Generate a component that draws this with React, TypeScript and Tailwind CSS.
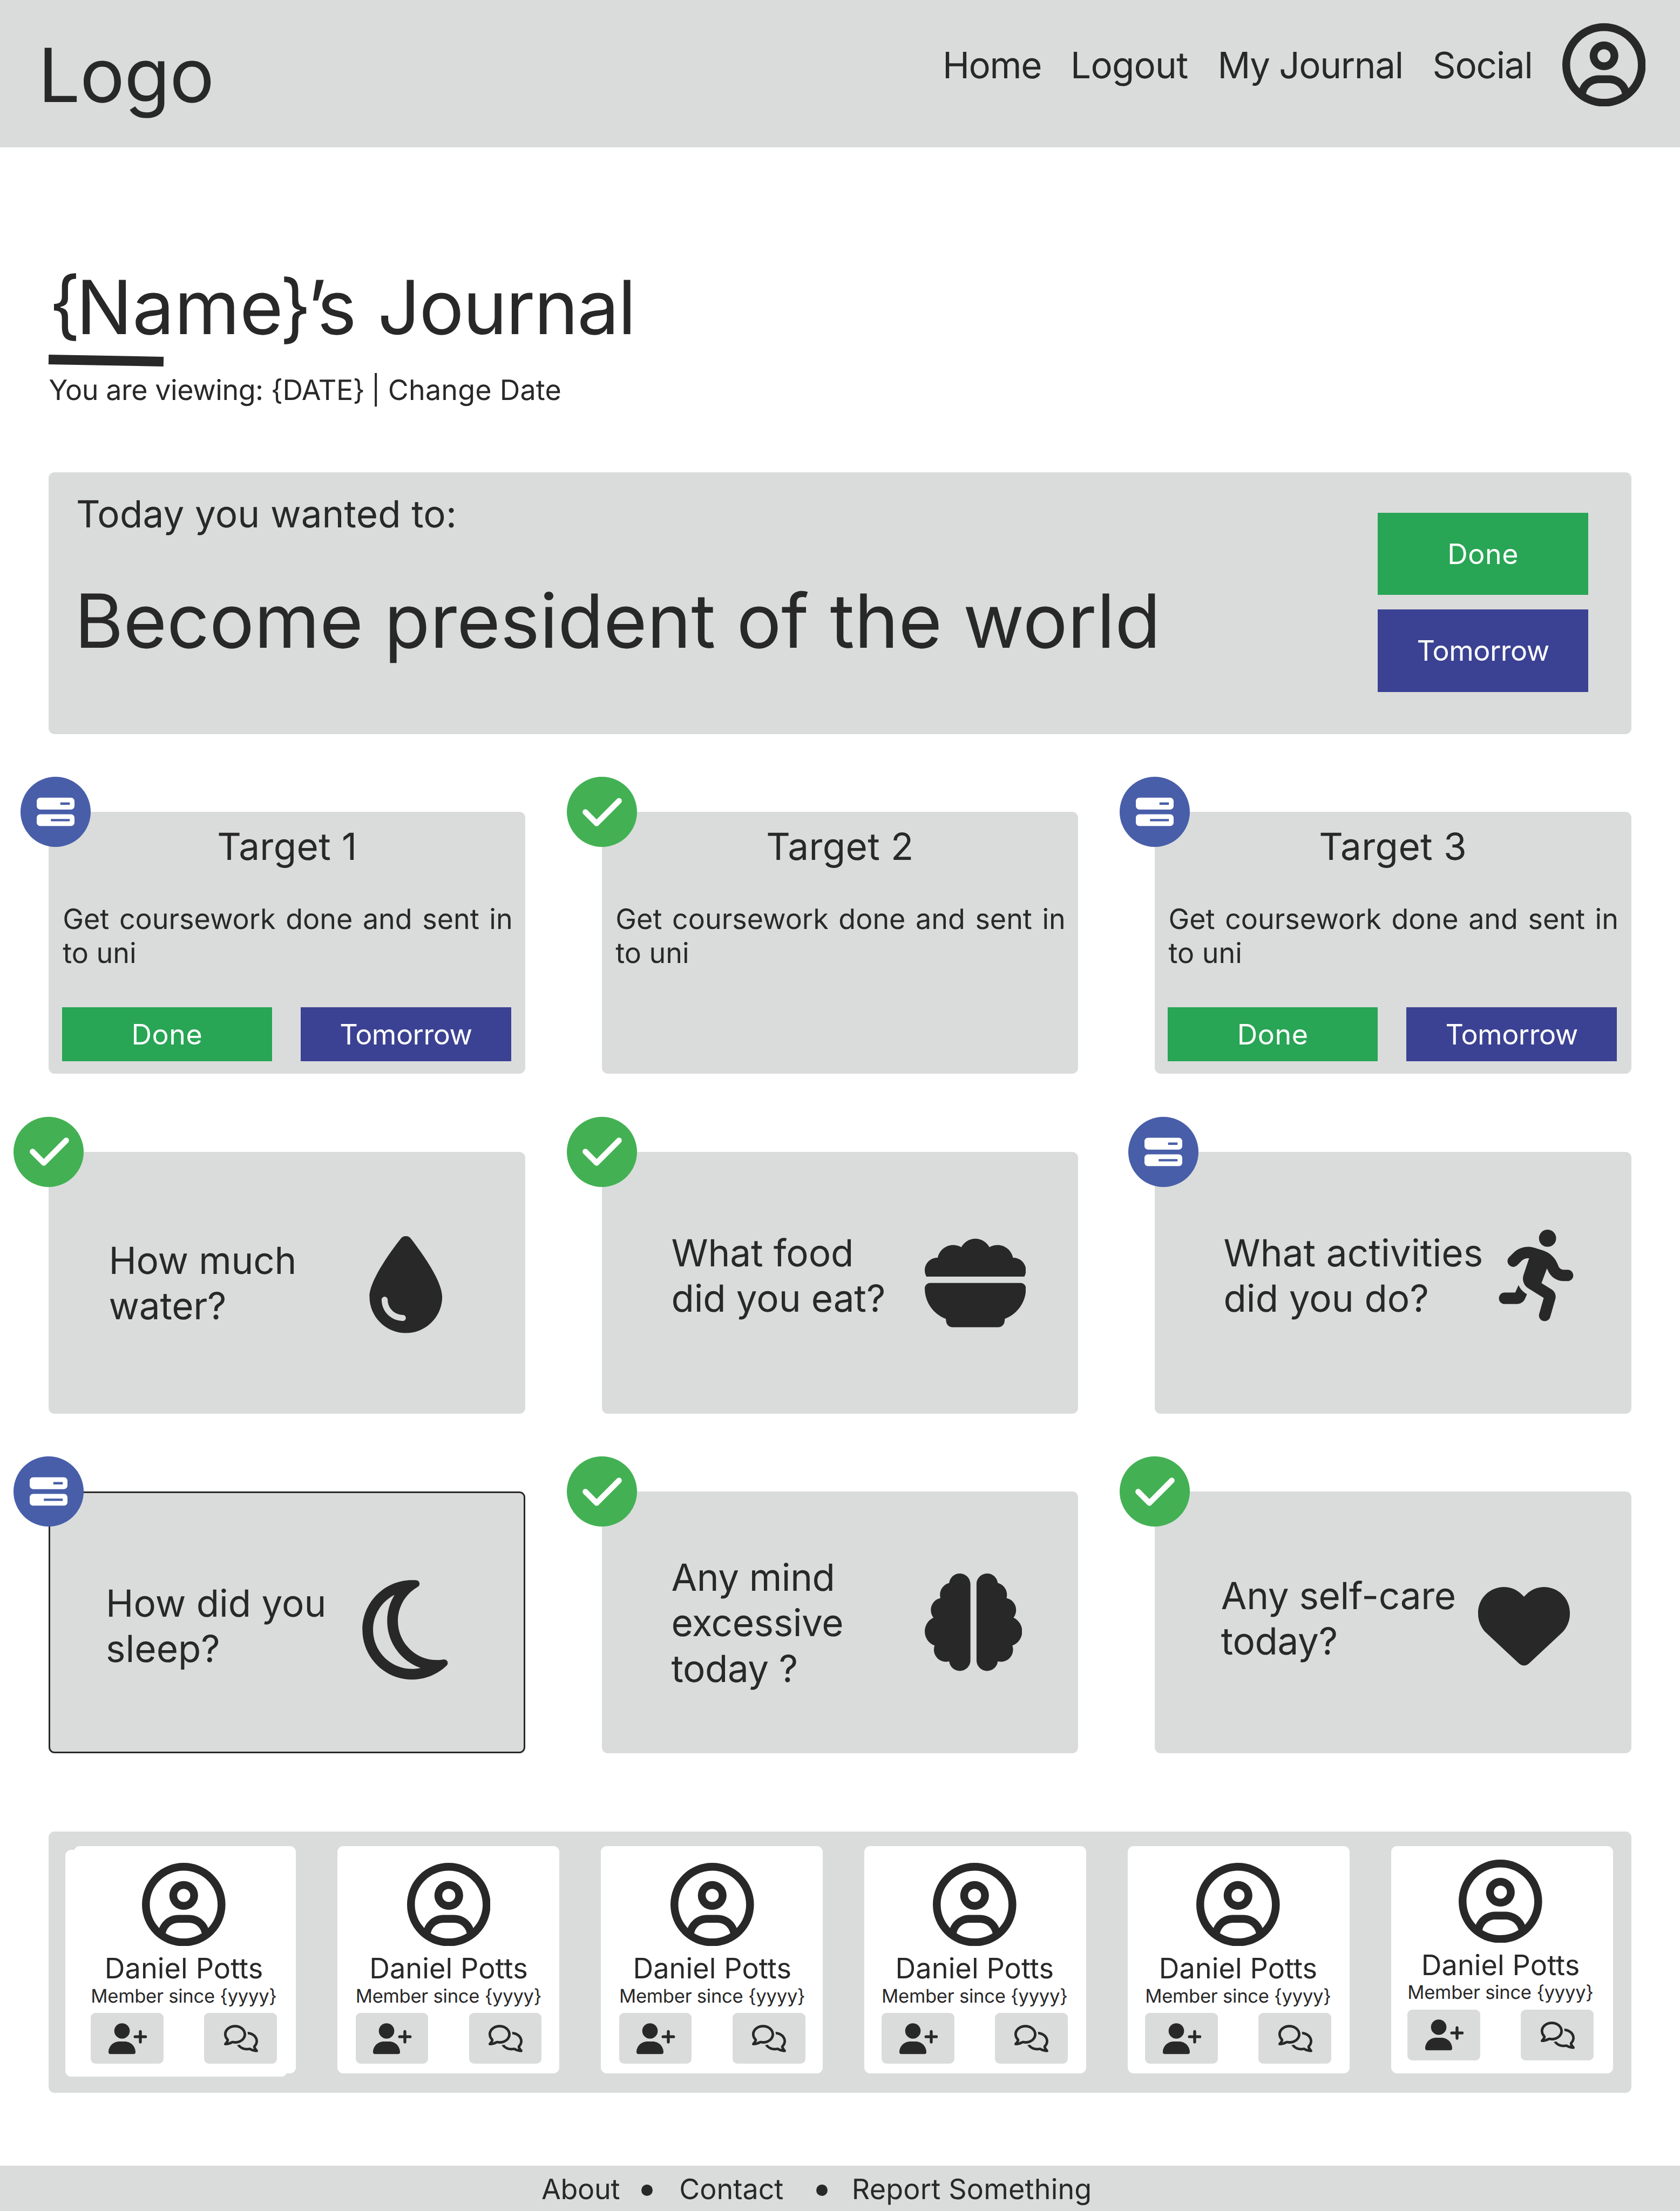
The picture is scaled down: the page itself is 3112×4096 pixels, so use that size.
import type { ReactNode } from 'react';
import type { IconType } from 'react-icons';
import {
  FaBarsProgress,
  FaBowlFood,
  FaBrain,
  FaCheck,
  FaDroplet,
  FaHeart,
  FaPersonRunning,
  FaRegCircleUser,
  FaRegComments,
  FaRegMoon,
  FaUserPlus,
} from 'react-icons/fa6';

type Status = 'done' | 'pending';

function StatusBadge({ status, className = '-left-[65px]' }: { status: Status; className?: string }) {
  const base = 'absolute -top-[65px] flex size-[130px] items-center justify-center rounded-full text-white';
  return status === 'done' ? (
    <div className={`${base} ${className} bg-[#43b153]`}>
      <FaCheck className="ml-[2px] size-[83px]" />
    </div>
  ) : (
    <div className={`${base} ${className} bg-[#485ea9]`}>
      <FaBarsProgress className="size-[70px]" />
    </div>
  );
}

function ActionButton({ kind, className }: { kind: 'Done' | 'Tomorrow'; className: string }) {
  const tone = kind === 'Done' ? 'bg-[#28a555] tracking-[0.5px]' : 'bg-[#3b4293] tracking-[-0.5px]';
  return (
    <button className={`flex w-[389.5px] items-center justify-center pt-[1px] text-[52px] leading-none text-white ${tone} ${className}`}>
      {kind}
    </button>
  );
}

function Header() {
  return (
    <header className="flex h-[273px] items-start bg-[#dadcdb]">
      <div className="ml-[70.5px] mt-[70.8px] w-[1675.4px] text-[138.3px] leading-none tracking-[-0.7px]">Logo</div>
      <nav className="mt-[88px] flex text-[67.3px] leading-none">
        <a className="w-[237.2px] tracking-[-1.35px]">Home</a>
        <a className="w-[272.4px] tracking-[-0.75px]">Logout</a>
        <a className="w-[398.1px] tracking-[-1.35px]">My Journal</a>
        <a className="w-[240.1px] tracking-[-1.25px]">Social</a>
      </nav>
      <FaRegCircleUser className="mt-[42.5px] size-[154.5px]" />
    </header>
  );
}

function Title() {
  return (
    <section className="h-[602.2px] pl-[90.2px] pt-[227.7px]">
      <h1 className="flex text-[138.3px] leading-none">
        <span className="-mt-[6px] w-[50.9px]">{'{'}</span>
        <span className="w-[377px]">Name</span>
        <span className="w-[51px]">{'}'}</span>
        <span className="w-[130.5px] tracking-[-7px]">’s</span>
        <span className="tracking-[-2px]">Journal</span>
      </h1>
      <div className="mt-[20px] h-[17.8px] w-[213px] rotate-[1.07deg] bg-[#282828]" />
      <p className="mt-[20.5px] flex text-[52px] leading-none">
        <span className="w-[597.3px] whitespace-nowrap tracking-[-0.45px]">{'You are viewing: {DATE}'}</span>
        <span className="w-[31.3px]">|</span>
        <span className="tracking-[0.2px]">Change Date</span>
      </p>
    </section>
  );
}

function Hero() {
  return (
    <section className="flex h-[484.6px] rounded-[11px] bg-[#dadcdb]">
      <div className="w-[2462px] pl-[47.6px] pt-[42.6px]">
        <p className="ml-[3px] text-[69.15px] leading-none tracking-[0.15px]">Today you wanted to:</p>
        <p className="mt-[95.3px] text-[138.3px] leading-none">Become president of the world</p>
      </div>
      <div className="flex flex-col gap-[27.3px] pt-[75px]">
        <ActionButton kind="Done" className="h-[152px]" />
        <ActionButton kind="Tomorrow" className="h-[152.4px]" />
      </div>
    </section>
  );
}

function TargetCard({ title, status, badge }: { title: string; status: Status; badge?: string }) {
  return (
    <article className="relative h-[484.8px] rounded-[11px] bg-[#dadcdb] pl-[24.2px]">
      <StatusBadge status={status} className={badge} />
      <h2 className="-ml-[24.2px] pt-[29.6px] text-center text-[69.15px] leading-none tracking-[0.4px]">{title}</h2>
      <p className="ml-[1.6px] mt-[69px] w-[833.5px] text-justify text-[52px] leading-[62.6px]">
        Get coursework done and sent in to uni
      </p>
      {status === 'pending' && (
        <div className="mt-[68.6px] flex gap-[53px]">
          <ActionButton kind="Done" className="h-[100.5px]" />
          <ActionButton kind="Tomorrow" className="h-[100.5px]" />
        </div>
      )}
    </article>
  );
}

interface PromptProps {
  text: string;
  textClass: string;
  icon: IconType;
  iconClass: string;
  status: Status;
  badge?: string;
  outlined?: boolean;
}

function PromptCard({ text, textClass, icon: Icon, iconClass, status, badge, outlined }: PromptProps) {
  return (
    <article className="relative flex h-[484.8px] items-start rounded-[11px] bg-[#dadcdb]">
      {outlined && <div className="absolute inset-0 rounded-[11px] border-[3px] border-[#282828]" />}
      <StatusBadge status={status} className={badge} />
      <p className={`shrink-0 whitespace-pre text-[69.15px] leading-[84.1px] ${textClass}`}>{text}</p>
      <Icon className={`shrink-0 ${iconClass}`} />
    </article>
  );
}

const prompts: PromptProps[] = [
  {
    text: 'How much\nwater?',
    textClass: 'ml-[111px] mt-[158.9px] w-[461px] tracking-[-0.2px]',
    icon: FaDroplet,
    iconClass: 'mt-[156.5px] size-[179.6px]',
    status: 'done',
  },
  {
    text: 'What food\ndid you eat?',
    textClass: 'ml-[128.9px] mt-[145px] w-[469.5px] tracking-[-0.1px]',
    icon: FaBowlFood,
    iconClass: 'mt-[148.9px] size-[187.5px]',
    status: 'done',
  },
  {
    text: 'What activities\ndid you do?',
    textClass: 'ml-[127.8px] mt-[145.2px] w-[499.7px] tracking-[0.1px]',
    icon: FaPersonRunning,
    iconClass: 'mt-[144.7px] size-[169.5px]',
    status: 'pending',
    badge: '-left-[49px]',
  },
  {
    text: 'How did you\nsleep?',
    textClass: 'ml-[105.7px] mt-[164.7px] w-[449.4px]',
    icon: FaRegMoon,
    iconClass: 'mt-[150.4px] size-[210.7px]',
    status: 'pending',
    outlined: true,
  },
  {
    text: 'Any mind\nexcessive\ntoday ?',
    textClass: 'ml-[128.9px] mt-[117.2px] w-[469.4px] tracking-[-0.4px]',
    icon: FaBrain,
    iconClass: 'mt-[152px] size-[180.5px]',
    status: 'done',
  },
  {
    text: 'Any self-care\ntoday?',
    textClass: 'ml-[123.1px] mt-[150.6px] w-[476px] tracking-[-0.3px]',
    icon: FaHeart,
    iconClass: 'mt-[162.8px] size-[170px]',
    status: 'done',
  },
];

function IconButton({ children }: { children: ReactNode }) {
  return (
    <button className="flex h-[94px] w-[134.6px] items-center justify-center rounded-[9px] bg-[#dadcdb]">{children}</button>
  );
}

function MemberCard({ shift, stacked }: { shift: string; stacked?: boolean }) {
  return (
    <article className="relative h-[420.2px] w-[411px] rounded-[11px] bg-white">
      {stacked && <div className="absolute -left-[16px] top-[6.4px] h-[420.2px] w-[411px] rounded-[11px] bg-white" />}
      <div className={`relative flex flex-col items-center ${shift}`}>
        <FaRegCircleUser className="size-[154.6px]" />
        <p className="mt-[10.8px] text-[52.2px] leading-[61px] tracking-[0.1px]">Daniel Potts</p>
        <p className="mt-[0.4px] whitespace-nowrap text-[34.58px] leading-[42px] tracking-[-0.27px]">{'Member since {yyyy}'}</p>
        <div className="mt-[9.8px] flex gap-[75.6px]">
          <IconButton>
            <FaUserPlus className="ml-[2px] size-[71.5px]" />
          </IconButton>
          <IconButton>
            <FaRegComments className="ml-[1px] size-[63px]" />
          </IconButton>
        </div>
      </div>
    </article>
  );
}

const memberShifts = [
  'pt-[30.5px] -ml-[3px]',
  'pt-[30.5px] ml-[1.6px]',
  'pt-[30.5px] ml-[2px]',
  'pt-[30.5px] -ml-[2px]',
  'pt-[30.5px] -ml-[2px]',
  'pt-[24.3px] -ml-[6px]',
];

function Footer() {
  return (
    <footer className="flex h-[84px] items-start bg-[#dadcdb] pt-[17.6px] text-[52px] leading-none">
      <a className="ml-[1003px] w-[184.8px] tracking-[-0.3px]">About</a>
      <span className="mr-[49.5px] mt-[17px] size-[21px] rounded-full bg-[#282828]" />
      <a className="w-[254px]">Contact</a>
      <span className="mr-[44.5px] mt-[17px] size-[21px] rounded-full bg-[#282828]" />
      <a className="whitespace-nowrap tracking-[0.2px]">Report Something</a>
    </footer>
  );
}

export default function App() {
  return (
    <div className="flex h-[4096px] w-[3112px] flex-col overflow-hidden bg-white font-['Inter',sans-serif] text-[#282828] [text-rendering:geometricPrecision]">
      <Header />
      <Title />
      <main className="ml-[90.4px] flex w-[2931.2px] flex-1 flex-col gap-[144.6px]">
        <Hero />
        <div className="grid grid-cols-3 gap-x-[141.2px] gap-y-[144.6px]">
          <TargetCard title="Target 1" status="pending" badge="-left-[52px]" />
          <TargetCard title="Target 2" status="done" />
          <TargetCard title="Target 3" status="pending" />
          {prompts.map((p) => (
            <PromptCard key={p.text} {...p} />
          ))}
        </div>
        <section className="flex h-[484.6px] gap-[77.1px] rounded-[11px] bg-[#dadcdb] pl-[46.2px] pt-[27.8px]">
          {memberShifts.map((shift, i) => (
            <MemberCard key={i} shift={shift} stacked={i === 0} />
          ))}
        </section>
      </main>
      <Footer />
    </div>
  );
}
